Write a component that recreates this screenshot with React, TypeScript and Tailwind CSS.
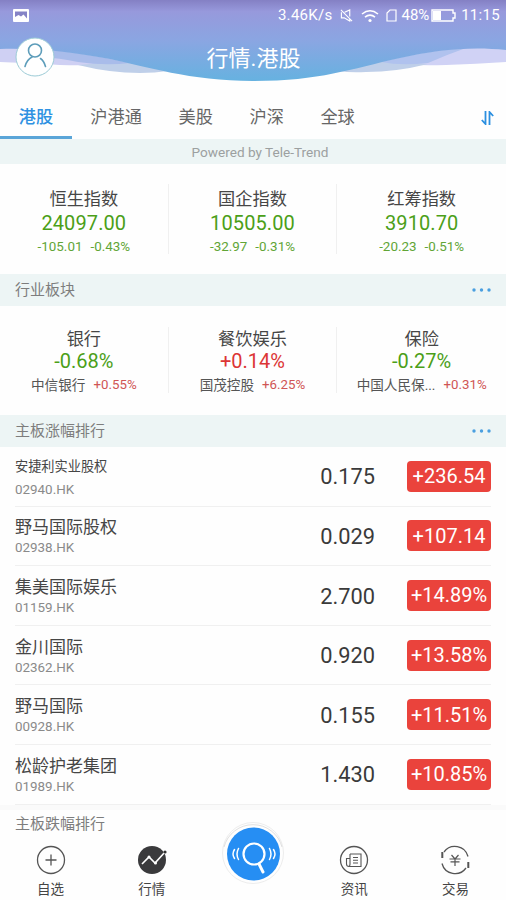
import { clsx } from "clsx";
import type { ReactNode } from "react";

interface Quote {
  name: string;
  value: string;
  up?: boolean;
  sub: string;
  subValue: string;
}

interface Stock {
  name: string;
  code: string;
  price: string;
  change: string;
  small?: boolean;
}

const tabs = ["港股", "沪港通", "美股", "沪深", "全球"];

const indices: Quote[] = [
  { name: "恒生指数", value: "24097.00", sub: "-105.01", subValue: "-0.43%" },
  { name: "国企指数", value: "10505.00", sub: "-32.97", subValue: "-0.31%" },
  { name: "红筹指数", value: "3910.70", sub: "-20.23", subValue: "-0.51%" },
];

const sectors: Quote[] = [
  { name: "银行", value: "-0.68%", sub: "中信银行", subValue: "+0.55%" },
  { name: "餐饮娱乐", value: "+0.14%", up: true, sub: "国茂控股", subValue: "+6.25%" },
  { name: "保险", value: "-0.27%", sub: "中国人民保...", subValue: "+0.31%" },
];

const stocks: Stock[] = [
  { name: "安捷利实业股权", code: "02940.HK", price: "0.175", change: "+236.54", small: true },
  { name: "野马国际股权", code: "02938.HK", price: "0.029", change: "+107.14" },
  { name: "集美国际娱乐", code: "01159.HK", price: "2.700", change: "+14.89%" },
  { name: "金川国际", code: "02362.HK", price: "0.920", change: "+13.58%" },
  { name: "野马国际", code: "00928.HK", price: "0.155", change: "+11.51%" },
  { name: "松龄护老集团", code: "01989.HK", price: "1.430", change: "+10.85%" },
];

function Waves() {
  return (
    <svg className="absolute inset-0 h-[97px] w-full" viewBox="0 0 506 97" preserveAspectRatio="none">
      <defs>
        <linearGradient id="sky" x1="0" y1="0" x2="0" y2="82" gradientUnits="userSpaceOnUse">
          <stop offset="0" stopColor="#8480c4" />
          <stop offset="0.14" stopColor="#9799dc" />
          <stop offset="0.5" stopColor="#8aa6e2" />
          <stop offset="1" stopColor="#65b2e0" />
        </linearGradient>
      </defs>
      {/* back wave */}
      <path d="M0 45H110L150 60L120 63Q95 66 60 65Q30 63 0 62Z" fill="#cfd0f3" />
      <path d="M506 45H396L356 60L386 63Q411 66 446 65Q476 64 506 62Z" fill="#d0d2f5" />
      {/* middle wave */}
      <path d="M78 65Q110 73 140 73Q155 73 168 71L125 61Z" fill="#bfcfe9" />
      <path d="M428 64Q396 72 366 72Q351 73 338 71L381 60Z" fill="#bfcfe9" />
      <path d="M40 49Q80 52 130 63Q105 66 78 62Q60 58 40 57Z" fill="#a9bcea" />
      <path d="M466 48Q430 50 381 62Q401 66 428 63Q446 55 466 48Z" fill="#b0c2ee" />
      <path
        d="M0 0H506V50C470 46 436 50 400 58C350 69 320 81 253 81C190 81 145 66 110 59C70 52 40 48 0 49Z"
        fill="url(#sky)"
      />
    </svg>
  );
}

function StatusBar() {
  return (
    <div className="relative flex h-[31px] items-center pl-[13px] pr-[6px] text-[15px] tracking-[0.3px] text-white">
      <svg className="h-[13px] w-4" viewBox="0 0 16 13">
        <rect width="16" height="13" rx="1" fill="#fff" />
        <path d="M2 2.500h12v7L10.500 5.500 8 7.500 5.500 6 2 8z" fill="#8583c6" />
      </svg>
      <span className="ml-auto">3.46K/s</span>
      <svg className="ml-[7px] h-[13px] w-[13px]" viewBox="0 0 14 14" fill="none" stroke="#fff" strokeWidth="1.2">
        <path d="M1 1l12 12M1.500 3.500v6h3L10.500 13v-2.500M5 3.500l5.500-2.500v7" />
      </svg>
      <svg className="ml-[8px] h-[14px] w-[18px]" viewBox="0 0 18 14" fill="none" stroke="#fff" strokeWidth="1.6">
        <path d="M1 5Q9-1.500 17 5M4 8.200Q9 4 14 8.200" />
        <circle cx="9" cy="11.500" r="1.600" fill="#fff" stroke="none" />
      </svg>
      <svg className="ml-[7px] h-[13px] w-[11px]" viewBox="0 0 11 13" fill="none" stroke="#fff" strokeWidth="1.2">
        <path d="M4 1h6v11H1V4z" />
      </svg>
      <span className="ml-[5px] tracking-[-0.1px]">48%</span>
      <svg className="ml-[2px] h-[13px] w-[25px]" viewBox="0 0 25 13">
        <path d="M1 1h21v3h2v5h-2v3H1z" fill="none" stroke="#fff" strokeWidth="1.4" />
        <path d="M2 2h8v9H2z" fill="#fff" />
      </svg>
      <span className="ml-[5px]">11:15</span>
    </div>
  );
}

function Header() {
  return (
    <header className="relative h-[97px]">
      <Waves />
      <StatusBar />
      <div className="relative grid h-[52px] grid-cols-[70px_1fr_70px] items-center pl-[15px]">
        <svg className="-mt-px h-10 w-10" viewBox="0 0 40 40" fill="none">
          <circle cx="20" cy="20" r="19" fill="#fff" stroke="#9ccbd6" strokeWidth="1" />
          <g stroke="#5d9dba" strokeWidth="1.6" strokeLinecap="round">
            <circle cx="20" cy="13.500" r="6.500" />
            <path d="M10 29.500C11.500 24 14 21.500 17 20M25.500 21.500Q29 24 30.500 29.500" />
          </g>
        </svg>
        <h1 className="-ml-[14px] pt-[3px] text-center text-[22px] leading-none text-white">行情.港股</h1>
      </div>
    </header>
  );
}

function SectionTitle({ children }: { children: ReactNode }) {
  return (
    <div className="flex h-8 items-center justify-between bg-[#edf5f5] pl-[15px] pr-[15px]">
      <h2 className="pt-px text-[15px] text-[#7d7d7d]">{children}</h2>
      <svg className="h-1 w-[19px]" viewBox="0 0 19 4" fill="#4a9fe0">
        <circle cx="2" cy="2" r="1.700" />
        <circle cx="9.500" cy="2" r="1.700" />
        <circle cx="17" cy="2" r="1.700" />
      </svg>
    </div>
  );
}

function QuoteGrid({ quotes, sector }: { quotes: Quote[]; sector?: boolean }) {
  return (
    <div className={clsx("grid grid-cols-3", sector ? "h-[109px] pt-[21px]" : "h-[110px] pt-5")}>
      {quotes.map((q, i) => (
        <div
          key={q.name}
          className={clsx(
            "flex flex-col items-center whitespace-nowrap",
            sector ? "h-[66px]" : "h-[70px]",
            i < 2 && "border-r border-[#f0f0f0]",
          )}
        >
          <span className={clsx("text-[17.2px] text-[#464646]", sector ? "pt-px leading-[22px]" : "mt-[3px] leading-6")}>
            {q.name}
          </span>
          <span
            className={clsx(
              "text-[20px]",
              sector ? "leading-[23px]" : "leading-6 tracking-[0.1px]",
              q.up ? "text-[#dc3535]" : "text-[#4b9f18]",
            )}
          >
            {q.value}
          </span>
          {sector ? (
            <div className="flex gap-2 text-[13.6px] leading-6 text-[#555]">
              <span>{q.sub}</span>
              <span className="text-[13.3px] text-[#d05555]">{q.subValue}</span>
            </div>
          ) : (
            <div className="flex gap-[8px] text-[13.4px] leading-6 text-[#61a536]">
              <span>{q.sub}</span>
              <span>{q.subValue}</span>
            </div>
          )}
        </div>
      ))}
    </div>
  );
}

function StockRow({ stock }: { stock: Stock }) {
  return (
    <li className="ml-[15px] mr-[15px] flex h-[59.6px] items-center border-b border-[#f0f0f0]">
      <div className="flex-1 pt-[3px]">
        <p className={clsx("leading-[22px] text-[#464646]", stock.small ? "text-[13.2px]" : "text-[17px]")}>
          {stock.name}
        </p>
        <p className={clsx("text-[13.4px] leading-5 text-[#8a8a8a]", stock.small && "mt-[2px]")}>{stock.code}</p>
      </div>
      <span className="mr-8 pt-[3px] text-[21.8px] text-[#3a3a3a]">{stock.price}</span>
      <span className="flex h-[31px] w-[84px] items-center justify-center rounded-[4px] bg-[#ea433c] text-[20px] text-white">
        {stock.change}
      </span>
    </li>
  );
}

function NavItem({ label, children }: { label: string; children: ReactNode }) {
  return (
    <div className="flex flex-col items-center pt-[6px]">
      <svg className="h-[30px] w-[30px]" viewBox="0 0 30 30" fill="none" stroke="#555" strokeWidth="1.3">
        {children}
      </svg>
      <span className="mt-[4px] text-[13.5px] leading-5 text-[#444]">{label}</span>
    </div>
  );
}

function BottomNav() {
  return (
    <nav className="grid h-[61px] grid-cols-5 bg-[#fefefe]">
      <NavItem label="自选">
        <circle cx="15" cy="15" r="13.500" />
        <path d="M15 9.500v11M9.500 15h11" />
      </NavItem>
      <NavItem label="行情">
        <circle cx="15" cy="15" r="14" fill="#3a3a3c" stroke="none" />
        <path d="M5 19l7-7 6 6 10-11" stroke="#fff" strokeWidth="1.600" />
        <circle cx="12" cy="12" r="1.500" fill="#fff" stroke="none" />
        <circle cx="18.500" cy="18" r="1.500" fill="#fff" stroke="none" />
        <circle cx="28" cy="7" r="1.600" fill="#333" stroke="none" />
      </NavItem>
      <div className="relative">
        {/* round search button, raised above the bar */}
        <svg className="absolute left-1/2 top-[-18px] h-[64px] w-[64px] -translate-x-1/2" viewBox="0 0 64 64" fill="none">
          <circle cx="32" cy="32" r="30.500" fill="#fefefe" stroke="#ededed" />
          <path d="M3 26A30 30 0 0 1 61 26" stroke="#e0e0e0" />
          <circle cx="32.500" cy="33" r="26.500" fill="#268ef3" />
          <g stroke="#fff" strokeLinecap="round">
            <circle cx="33" cy="33" r="10.500" strokeWidth="2.200" />
            <path d="M38 43l4 8" strokeWidth="3" />
            <path
              d="M17.500 27.500q-3 5.500 0 11M13.500 28.500q-3 4.500 0 9M48.500 27.500q3 5.500 0 11M52.500 28.500q3 4.500 0 9"
              strokeWidth="1.500"
            />
          </g>
        </svg>
      </div>
      <NavItem label="资讯">
        <circle cx="15" cy="15" r="13.500" />
        <path
          d="M11 9h11v12.500H10q-2.500 0-2.500-2.500v-5.500h3.500M11 9v10q0 2.500-1.500 2.500M14 12.500h5M14 15.300h5M14 18h5"
          strokeWidth="1.100"
        />
      </NavItem>
      <NavItem label="交易">
        <path d="M4 7A13.500 13.500 0 0 1 28 11.500M26 23A13.500 13.500 0 0 1 2 18.500" />
        <path d="M2.300 7v6M28.300 17v6" strokeWidth="2" />
        <path d="M11.500 10l3.500 4 3.500-4M9.500 14h11M10.500 16.800h9M15 14v7" strokeWidth="1.200" />
      </NavItem>
    </nav>
  );
}

export default function App() {
  return (
    <div className="flex h-[900px] w-[506px] flex-col overflow-hidden bg-[#fefefe] font-[Roboto,'Noto_Sans_CJK_SC',sans-serif]">
      <Header />

      <div className="flex h-[42px] items-stretch justify-between pr-3">
        <div className="flex">
          {tabs.map((tab, i) => (
            <button
              key={tab}
              type="button"
              className={clsx(
                "border-b-[3px] pt-[3px] text-[17.2px]",
                i === 0
                  ? "border-[#5aa5d8] px-[18.800px] font-medium text-[#2f92e2]"
                  : "border-transparent px-[18.300px] text-[#666]",
              )}
            >
              {tab}
            </button>
          ))}
        </div>
        <svg className="mt-[14px] h-[14px] w-[13px]" viewBox="0 0 13 14" fill="none" stroke="#2b8fe0" strokeWidth="1.800">
          <path d="M4.500 0v13L.8 9M8.500 14V1L12.200 5" />
        </svg>
      </div>
      <div className="flex h-[25px] items-center justify-center bg-[#edf5f5] pl-[14px] pt-[2px] text-[13.600px] text-[#9ca0a0]">
        Powered by Tele-Trend
      </div>

      <QuoteGrid quotes={indices} />
      <SectionTitle>行业板块</SectionTitle>
      <QuoteGrid quotes={sectors} sector />
      <SectionTitle>主板涨幅排行</SectionTitle>

      <ul>
        {stocks.map((stock) => (
          <StockRow key={stock.code} stock={stock} />
        ))}
      </ul>
      <div className="flex-1 border-t-[5px] border-[#fafafa] pl-[15px] pt-[3px] text-[15px] leading-[22px] text-[#7d7d7d]">
        主板跌幅排行
      </div>

      <BottomNav />
    </div>
  );
}
